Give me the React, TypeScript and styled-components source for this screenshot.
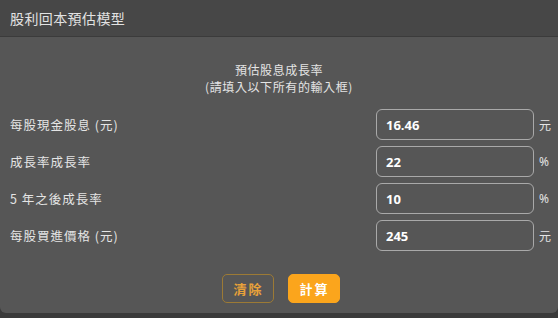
import React from "react";
import styled, { createGlobalStyle } from "styled-components";

const Global = createGlobalStyle`
  html, body { margin: 0; padding: 0; background: #3a3a3a; }
  body { width: 558px; height: 318px; overflow: hidden; font-family: "Noto Sans", "Noto Sans CJK TC", sans-serif; }
`;

const Dialog = styled.div`
  width: 558px;
  height: 313px;
  background: #565656;
  border-radius: 0 0 6px 6px;
  display: flex;
  flex-direction: column;
  overflow: hidden;
`;

const Header = styled.div`
  height: 36px;
  background: #474747;
  border-bottom: 1px solid #3b3b3b;
  display: flex;
  align-items: center;
  padding-left: 10px;
  color: #e2e2e2;
  font-size: 14px;
  letter-spacing: 0.4px;
  font-family: "Noto Sans CJK TC", sans-serif;
`;

const Body = styled.div`
  display: flex;
  flex-direction: column;
  padding-top: 24px;
`;

const Heading = styled.div`
  text-align: center;
  color: #e4e4e4;
  font-size: 12px;
  line-height: 17px;
  letter-spacing: 0.6px;
  font-family: "Noto Sans CJK TC", sans-serif;
  margin-bottom: 14px;
`;

const Rows = styled.div`
  display: flex;
  flex-direction: column;
  gap: 6px;
`;

const Row = styled.div`
  display: flex;
  align-items: center;
  height: 31px;
  padding-left: 10px;
`;

const Label = styled.div`
  flex: 1;
  color: #e4e4e4;
  font-size: 12.5px;
  letter-spacing: 1px;
  font-family: "Noto Sans CJK TC", sans-serif;
`;

const Input = styled.input<{ $shift?: number }>`
  box-sizing: border-box;
  width: 158px;
  height: 31px;
  margin-left: ${(p) => p.$shift ?? 0}px;
  border: 1px solid #a9a9a9;
  border-radius: 6px;
  background: transparent;
  color: #ffffff;
  font-weight: 700;
  font-size: 13px;
  font-family: "Open Sans", "Noto Sans", sans-serif;
  padding: 0 9px;
  outline: none;
`;

const Unit = styled.div`
  width: 24px;
  box-sizing: border-box;
  padding-left: 5px;
  color: #e4e4e4;
  font-size: 12px;
  font-family: "Noto Sans", "Noto Sans CJK TC", sans-serif;
`;

const Buttons = styled.div`
  display: flex;
  justify-content: center;
  gap: 14px;
  margin-top: 23px;
  padding-left: 3px;
`;

const Button = styled.button<{ $primary?: boolean }>`
  box-sizing: border-box;
  width: 52px;
  height: 29px;
  border-radius: 5px;
  font-size: 13px;
  letter-spacing: 2px;
  font-weight: 700;
  font-family: "Noto Sans CJK TC", sans-serif;
  border: 1px solid ${(p) => (p.$primary ? "#fba51c" : "#9c7a35")};
  background: ${(p) => (p.$primary ? "#fba51c" : "transparent")};
  color: ${(p) => (p.$primary ? "#ffffff" : "#e8a13a")};
  padding: 0 0 0 2px;
  cursor: pointer;
`;

const fields = [
  { label: "每股現金股息 (元)", value: "16.46", unit: "元", shift: 0 },
  { label: "成長率成長率", value: "22", unit: "%", shift: 1 },
  { label: "5 年之後成長率", value: "10", unit: "%", shift: 2 },
  { label: "每股買進價格 (元)", value: "245", unit: "元", shift: 0 },
];

export default function App() {
  return (
    <>
      <Global />
      <Dialog>
        <Header>股利回本預估模型</Header>
        <Body>
          <Heading>
            預估股息成長率
            <br />
            (請填入以下所有的輸入框)
          </Heading>
          <Rows>
            {fields.map((f) => (
              <Row key={f.label}>
                <Label>{f.label}</Label>
                <Input defaultValue={f.value} $shift={f.shift} />
                <Unit>{f.unit}</Unit>
              </Row>
            ))}
          </Rows>
          <Buttons>
            <Button>清除</Button>
            <Button $primary>計算</Button>
          </Buttons>
        </Body>
      </Dialog>
    </>
  );
}
